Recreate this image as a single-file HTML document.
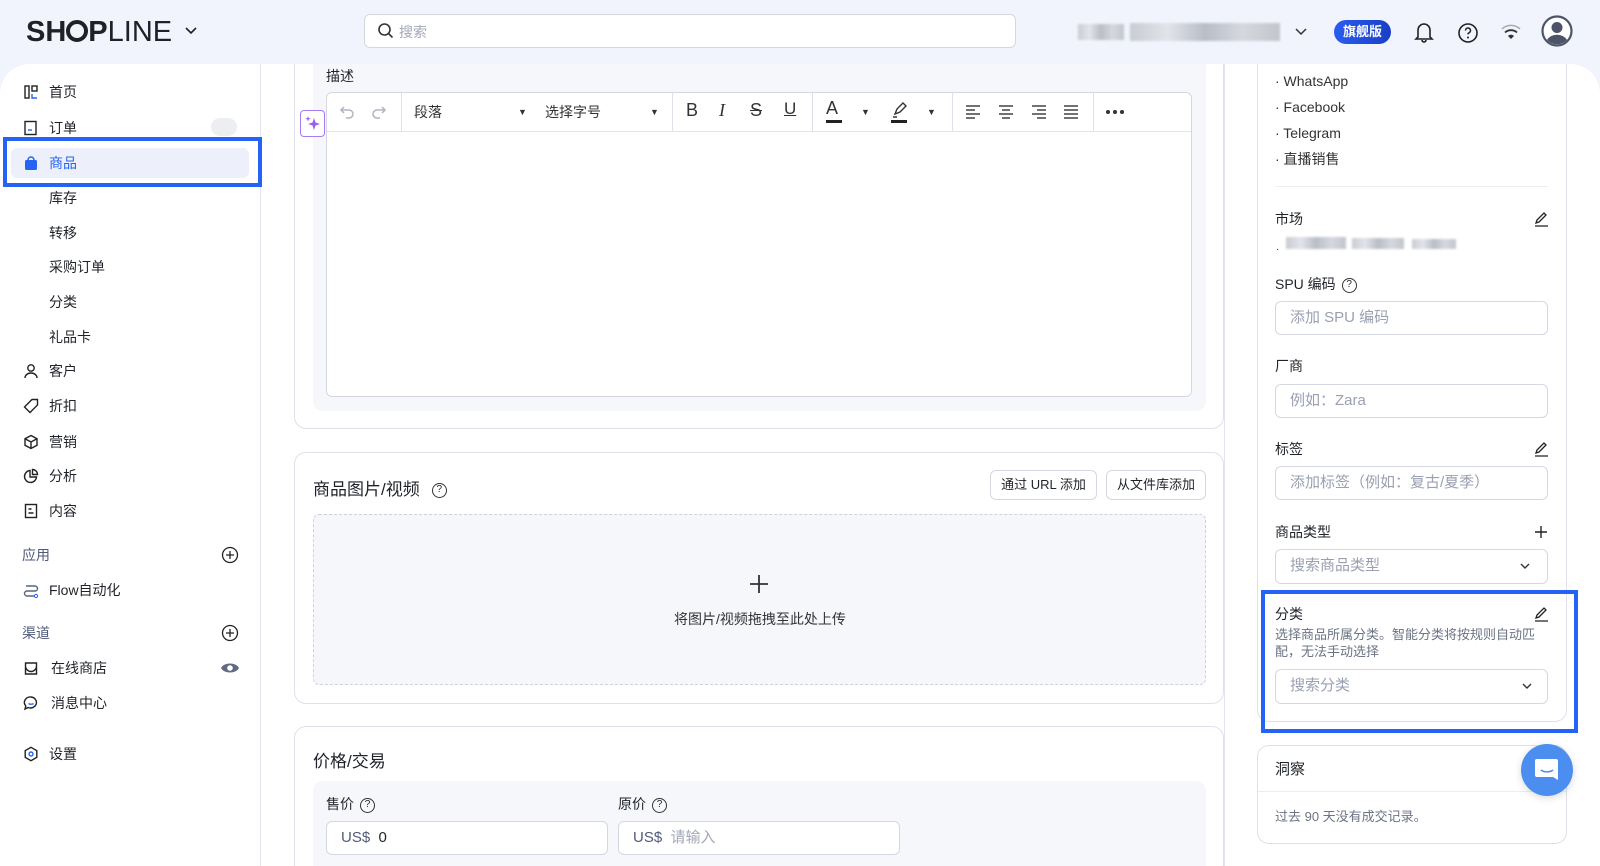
<!DOCTYPE html>
<html><head><meta charset="utf-8"><style>
*{box-sizing:border-box;margin:0;padding:0}
html,body{width:1600px;height:866px;overflow:hidden}
body{background:#f1f4fd;font-family:"Liberation Sans","Noto Sans CJK SC",sans-serif;font-size:14px;color:#1f2329;position:relative}
.a{position:absolute}
.panel{position:absolute;left:0;top:64px;width:1600px;height:900px;background:#fff;border-radius:30px 30px 0 0}
.vl{position:absolute;width:1px;background:#e3e5ee}
.nav{position:absolute;left:49px;font-size:14px;color:#1f2329;line-height:20px}
.ic{position:absolute;left:23px}
.card{position:absolute;border:1px solid #dfe1ea;border-radius:12px;background:#fff}
.inp{position:absolute;border:1px solid #d5d8e2;border-radius:6px;background:#fff;color:#9aa0b2;font-size:15px;padding-left:14px;line-height:32px}
.lbl{position:absolute;font-size:14px;color:#1f2329}
.tb{position:absolute;top:102px;font-size:15px;color:#333}
.sep{position:absolute;top:93px;width:1px;height:38px;background:#dfe1ea}
.q{display:inline-block;width:15px;height:15px;border:1.3px solid #333;border-radius:50%;font-size:10px;line-height:12px;text-align:center;vertical-align:middle;margin-left:6px}
.blur{position:absolute;background:linear-gradient(90deg,#c9ccd3,#e2e4ea,#b9bdc6,#d6d8df,#c2c5cd);filter:blur(1px)}
</style></head><body>
<!-- top bar -->
<div class="a" style="left:26px;top:16px;font-size:29px;font-weight:bold;letter-spacing:0px;color:#1e2128">SH<span style="display:inline-block;width:22px;height:22px;border:4px solid #1e2128;border-radius:50%;vertical-align:-1px"></span>P<span style="font-weight:normal">LINE</span></div>
<svg class="a" style="left:184px;top:25px" width="14" height="12"><path d="M2 3l5 5 5-5" stroke="#1e2128" stroke-width="1.6" fill="none"/></svg>
<div class="a" style="left:364px;top:14px;width:652px;height:34px;border:1px solid #d5d8e2;border-radius:6px;background:#fff"></div>
<svg class="a" style="left:377px;top:22px" width="18" height="18"><circle cx="7.5" cy="7.5" r="5.5" stroke="#333" stroke-width="1.6" fill="none"/><path d="M11.5 11.5l4 4" stroke="#333" stroke-width="1.6"/></svg>
<div class="a" style="left:399px;top:22px;color:#a3a8b6;font-size:14px">搜索</div>
<div class="blur" style="left:1078px;top:24px;width:46px;height:16px"></div>
<div class="blur" style="left:1130px;top:23px;width:150px;height:18px"></div>
<svg class="a" style="left:1294px;top:26px" width="14" height="12"><path d="M2 3l5 5 5-5" stroke="#333" stroke-width="1.5" fill="none"/></svg>
<div class="a" style="left:1334px;top:20px;width:57px;height:24px;border-radius:12px;background:linear-gradient(90deg,#2c5cf0,#1a3fc6);color:#fff;font-size:13px;font-weight:bold;text-align:center;line-height:24px">旗舰版</div>
<svg class="a" style="left:1413px;top:20px" width="22" height="24"><path d="M5 17V10a6 6 0 0 1 12 0v7l2 2H3z M9 20a2 2 0 0 0 4 0" stroke="#222" stroke-width="1.6" fill="none"/></svg>
<svg class="a" style="left:1456px;top:21px" width="24" height="24"><circle cx="12" cy="12" r="9" stroke="#222" stroke-width="1.6" fill="none"/><path d="M9.5 9.5a2.5 2.5 0 1 1 3.5 2.3c-.7.3-1 .8-1 1.6" stroke="#222" stroke-width="1.5" fill="none"/><circle cx="12" cy="16.5" r="1" fill="#222"/></svg>
<svg class="a" style="left:1499px;top:22px" width="24" height="20"><path d="M3 7a13 13 0 0 1 18 0" stroke="#aaa" stroke-width="1.5" fill="none"/><path d="M6 10.5a9 9 0 0 1 12 0" stroke="#333" stroke-width="1.8" fill="none"/><path d="M9 14l3 3 3-3a4 4 0 0 0-6 0z" fill="#333"/></svg>
<svg class="a" style="left:1541px;top:15px" width="32" height="32"><circle cx="16" cy="16" r="14.5" stroke="#4c5468" stroke-width="2.2" fill="#fff"/><circle cx="16" cy="12.5" r="5.5" fill="#4c5468"/><path d="M6 25a11 9 0 0 1 20 0a14 14 0 0 1-20 0z" fill="#4c5468"/></svg>

<div class="panel"></div>
<div class="vl" style="left:260px;top:64px;height:802px"></div>
<div class="vl" style="left:1224px;top:64px;height:802px"></div>

<!-- sidebar -->
<div class="a" style="left:3px;top:137px;width:259px;height:50px;border:4px solid #2563f5"></div>
<div class="a" style="left:11px;top:148px;width:238px;height:30px;background:#edf0fb;border-radius:6px"></div>
<svg class="ic" style="top:84px" width="16" height="16"><rect x="2" y="2" width="4" height="12" stroke="#222" stroke-width="1.4" fill="none"/><rect x="9" y="2" width="5" height="5" stroke="#222" stroke-width="1.4" fill="none"/><path d="M9 10v4h5" stroke="#2563f5" stroke-width="1.4" fill="none"/></svg>
<div class="nav" style="top:82px">首页</div>
<svg class="ic" style="top:120px" width="16" height="16"><rect x="2" y="1.5" width="11" height="13" stroke="#222" stroke-width="1.4" fill="none"/><path d="M5 10h4" stroke="#2563f5" stroke-width="1.4"/></svg>
<div class="nav" style="top:118px">订单</div>
<div class="a" style="left:211px;top:118px;width:26px;height:18px;border-radius:9px;background:#eceef2"></div>
<svg class="ic" style="top:155px" width="16" height="16"><path d="M5 5a3 3 0 0 1 6 0" stroke="#2563f5" stroke-width="1.5" fill="none"/><rect x="2" y="5" width="12" height="10" rx="1.5" fill="#2563f5"/></svg>
<div class="nav" style="top:153px;color:#2563f5">商品</div>
<div class="nav" style="top:188px">库存</div>
<div class="nav" style="top:223px">转移</div>
<div class="nav" style="top:257px">采购订单</div>
<div class="nav" style="top:292px">分类</div>
<div class="nav" style="top:327px">礼品卡</div>
<svg class="ic" style="top:363px" width="16" height="16"><circle cx="8" cy="5" r="3.2" stroke="#222" stroke-width="1.4" fill="none"/><path d="M2 15a6 5 0 0 1 12 0" stroke="#222" stroke-width="1.4" fill="none"/></svg>
<div class="nav" style="top:361px">客户</div>
<svg class="ic" style="top:398px" width="16" height="16"><path d="M9 1.5h5.5V7L7 14.5 1.5 9z" stroke="#222" stroke-width="1.4" fill="none"/></svg>
<div class="nav" style="top:396px">折扣</div>
<svg class="ic" style="top:434px" width="16" height="16"><path d="M8 1.5l6 3.2v6.6L8 14.5 2 11.3V4.7z M2 4.7l6 3.3 6-3.3 M8 8v6.5" stroke="#222" stroke-width="1.4" fill="none"/></svg>
<div class="nav" style="top:432px">营销</div>
<svg class="ic" style="top:468px" width="16" height="16"><path d="M7 2.5a6 6 0 1 0 6.5 6.5H7z" stroke="#222" stroke-width="1.4" fill="none"/><path d="M9.5 1.5a5 5 0 0 1 5 5h-5z" stroke="#222" stroke-width="1.4" fill="none"/></svg>
<div class="nav" style="top:466px">分析</div>
<svg class="ic" style="top:503px" width="16" height="16"><rect x="2.5" y="1.5" width="11" height="13" stroke="#222" stroke-width="1.4" fill="none"/><path d="M5.5 6h3M5.5 10h5" stroke="#222" stroke-width="1.4"/></svg>
<div class="nav" style="top:501px">内容</div>
<div class="nav" style="top:545px;left:22px;color:#4f5b7a">应用</div>
<svg class="a" style="left:221px;top:546px" width="18" height="18"><circle cx="9" cy="9" r="7.5" stroke="#222" stroke-width="1.3" fill="none"/><path d="M9 5v8M5 9h8" stroke="#222" stroke-width="1.3"/></svg>
<svg class="ic" style="top:582px" width="16" height="16"><path d="M3 4h9a2.5 2.5 0 0 1 0 5H4a2.5 2.5 0 0 0 0 5h8" stroke="#5a6480" stroke-width="1.4" fill="none"/><circle cx="13" cy="14" r="1.6" stroke="#2563f5" fill="none"/></svg>
<div class="nav" style="top:580px">Flow自动化</div>
<div class="nav" style="top:623px;left:22px;color:#4f5b7a">渠道</div>
<svg class="a" style="left:221px;top:624px" width="18" height="18"><circle cx="9" cy="9" r="7.5" stroke="#222" stroke-width="1.3" fill="none"/><path d="M9 5v8M5 9h8" stroke="#222" stroke-width="1.3"/></svg>
<svg class="ic" style="top:660px" width="16" height="16"><path d="M2.5 6V3h11v3a2 2 0 0 1-11 0z M2.5 7v7h11V7" stroke="#222" stroke-width="1.4" fill="none"/></svg>
<div class="nav" style="top:658px;left:51px">在线商店</div>
<svg class="a" style="left:220px;top:661px" width="20" height="14"><path d="M1 7c3-6 15-6 18 0c-3 6-15 6-18 0z" fill="#5f6a85"/><circle cx="10" cy="7" r="2.8" fill="#fff"/></svg>
<svg class="ic" style="top:695px" width="16" height="16"><path d="M8 2a6 5.5 0 1 1-3 10.5L2 14l.8-3A6 5.5 0 0 1 8 2z" stroke="#222" stroke-width="1.4" fill="none"/><path d="M5.5 8.5c1 1 4 1 5 0" stroke="#2563f5" stroke-width="1.3" fill="none"/></svg>
<div class="nav" style="top:693px;left:51px">消息中心</div>
<svg class="ic" style="top:746px" width="16" height="16"><path d="M8 1.3l5.8 3.3v6.8L8 14.7 2.2 11.4V4.6z" stroke="#222" stroke-width="1.4" fill="none"/><circle cx="8" cy="8" r="2" stroke="#2563f5" stroke-width="1.4" fill="none"/></svg>
<div class="nav" style="top:744px">设置</div>

<!-- card 1 description -->
<div class="card" style="left:294px;top:64px;width:930px;height:365px;border-top:none;border-radius:0 0 12px 12px"></div>
<div class="a" style="left:313px;top:64px;width:893px;height:347px;background:#f6f7fb;border-radius:0 0 10px 10px"></div>
<div class="lbl" style="left:326px;top:66px">描述</div>
<div class="a" style="left:326px;top:92px;width:866px;height:305px;background:#fff;border:1px solid #d5d8e2;border-radius:6px"></div>
<div class="a" style="left:327px;top:131px;width:864px;height:1px;background:#e3e5ee"></div>
<div class="a" style="left:300px;top:110px;width:25px;height:27px;border:1.5px solid #a77cf2;border-radius:4px;background:#fff"></div>
<svg class="a" style="left:303px;top:114px" width="20" height="20"><path d="M11 4l1.5 4.5L17 10l-4.5 1.5L11 16l-1.5-4.5L5 10l4.5-1.5z" fill="#9b5cf0"/><path d="M5 2l.7 2 2 .7-2 .7L5 7.5l-.7-2-2-.7 2-.7z" fill="#9b5cf0"/></svg>
<svg class="a" style="left:338px;top:103px" width="18" height="18"><path d="M6 4L3 7l3 3M3 7h8a4 4 0 0 1 0 8H8" stroke="#b0b4c0" stroke-width="1.5" fill="none"/></svg>
<svg class="a" style="left:370px;top:103px" width="18" height="18"><path d="M12 4l3 3-3 3M15 7H7a4 4 0 0 0 0 8h3" stroke="#b0b4c0" stroke-width="1.5" fill="none"/></svg>
<div class="sep" style="left:401px"></div>
<div class="tb" style="left:414px;font-size:14px">段落</div>
<div class="tb" style="left:518px;font-size:9px;top:107px">▼</div>
<div class="tb" style="left:545px;font-size:14px">选择字号</div>
<div class="tb" style="left:650px;font-size:9px;top:107px">▼</div>
<div class="sep" style="left:672px"></div>
<div class="tb" style="left:686px;font-size:18px;top:100px">B</div>
<div class="tb" style="left:719px;font-size:18px;top:100px;font-family:'Liberation Serif';font-style:italic">I</div>
<div class="tb" style="left:750px;font-size:18px;top:100px;text-decoration:line-through">S</div>
<div class="tb" style="left:784px;font-size:17px;top:99px;text-decoration:underline">U</div>
<div class="sep" style="left:812px"></div>
<div class="tb" style="left:826px;font-size:18px;top:98px">A</div>
<div class="a" style="left:826px;top:120px;width:16px;height:3px;background:#222"></div>
<div class="tb" style="left:861px;font-size:9px;top:107px">▼</div>
<svg class="a" style="left:890px;top:100px" width="18" height="24"><path d="M5 14l2-5 6-6 3 3-6 6z M3 17h4" stroke="#333" stroke-width="1.4" fill="none"/><rect x="1" y="20" width="16" height="3" fill="#222"/></svg>
<div class="tb" style="left:927px;font-size:9px;top:107px">▼</div>
<div class="sep" style="left:952px"></div>
<svg class="a" style="left:964px;top:104px" width="120" height="16"><g stroke="#444" stroke-width="1.4"><path d="M2 2h14M2 6h9M2 10h14M2 14h9"/><path d="M35 2h14M38 6h8M35 10h14M38 14h8"/><path d="M68 2h14M73 6h9M68 10h14M73 14h9"/><path d="M100 2h14M100 6h14M100 10h14M100 14h14"/></g></svg>
<div class="sep" style="left:1093px"></div>
<svg class="a" style="left:1105px;top:109px" width="20" height="6"><circle cx="3" cy="3" r="2" fill="#333"/><circle cx="10" cy="3" r="2" fill="#333"/><circle cx="17" cy="3" r="2" fill="#333"/></svg>

<!-- card 2 media -->
<div class="card" style="left:294px;top:452px;width:930px;height:252px"></div>
<div class="a" style="left:313px;top:475px;font-size:17px">商品图片/视频<span class="q" style="margin-left:12px">?</span></div>
<div class="a" style="left:990px;top:470px;width:107px;height:30px;border:1px solid #d5d8e2;border-radius:6px;font-size:13px;text-align:center;line-height:28px">通过 URL 添加</div>
<div class="a" style="left:1106px;top:470px;width:100px;height:30px;border:1px solid #d5d8e2;border-radius:6px;font-size:13px;text-align:center;line-height:28px">从文件库添加</div>
<div class="a" style="left:313px;top:514px;width:893px;height:171px;border:1.5px dashed #cfd2dc;border-radius:6px;background:#f6f7fb"></div>
<svg class="a" style="left:749px;top:574px" width="20" height="20"><path d="M10 1v18M1 10h18" stroke="#333" stroke-width="1.8"/></svg>
<div class="a" style="left:560px;top:609px;width:400px;text-align:center;font-size:14px;color:#333">将图片/视频拖拽至此处上传</div>

<!-- card 3 price -->
<div class="card" style="left:294px;top:726px;width:930px;height:180px"></div>
<div class="a" style="left:313px;top:747px;font-size:17px">价格/交易</div>
<div class="a" style="left:313px;top:781px;width:893px;height:120px;background:#f6f7fb;border-radius:10px"></div>
<div class="lbl" style="left:326px;top:794px">售价<span class="q">?</span></div>
<div class="lbl" style="left:618px;top:794px">原价<span class="q">?</span></div>
<div class="inp" style="left:326px;top:821px;width:282px;height:34px;color:#4f5b7a">US$&nbsp; <span style="color:#1f2329">0</span></div>
<div class="inp" style="left:618px;top:821px;width:282px;height:34px;color:#4f5b7a">US$&nbsp; <span style="color:#a3a8b6">请输入</span></div>

<!-- right card -->
<div class="card" style="left:1257px;top:64px;width:310px;height:658px;border-top:none;border-radius:0 0 12px 12px"></div>
<div class="a" style="left:1275px;top:68px;font-size:14px;line-height:26px;color:#333">· WhatsApp<br>· Facebook<br>· Telegram<br>· 直播销售</div>
<div class="a" style="left:1275px;top:186px;width:273px;height:1px;background:#eceef2"></div>
<div class="lbl" style="left:1275px;top:209px">市场</div>
<svg class="a" style="left:1533px;top:211px" width="16" height="16"><path d="M3 12l1-3 7-7 2 2-7 7z M2 15h13" stroke="#222" stroke-width="1.3" fill="none"/></svg>
<div class="a" style="left:1276px;top:244px;font-size:10px">·</div>
<div class="blur" style="left:1286px;top:237px;width:60px;height:12px"></div>
<div class="blur" style="left:1352px;top:238px;width:52px;height:11px"></div>
<div class="blur" style="left:1412px;top:239px;width:44px;height:10px"></div>
<div class="lbl" style="left:1275px;top:274px">SPU 编码<span class="q">?</span></div>
<div class="inp" style="left:1275px;top:301px;width:273px;height:34px">添加 SPU 编码</div>
<div class="lbl" style="left:1275px;top:356px">厂商</div>
<div class="inp" style="left:1275px;top:384px;width:273px;height:34px">例如：Zara</div>
<div class="lbl" style="left:1275px;top:439px">标签</div>
<svg class="a" style="left:1533px;top:441px" width="16" height="16"><path d="M3 12l1-3 7-7 2 2-7 7z M2 15h13" stroke="#222" stroke-width="1.3" fill="none"/></svg>
<div class="inp" style="left:1275px;top:466px;width:273px;height:34px">添加标签（例如：复古/夏季）</div>
<div class="lbl" style="left:1275px;top:522px">商品类型</div>
<svg class="a" style="left:1533px;top:524px" width="16" height="16"><path d="M8 2v12M2 8h12" stroke="#222" stroke-width="1.4"/></svg>
<div class="inp" style="left:1275px;top:549px;width:273px;height:35px">搜索商品类型</div>
<svg class="a" style="left:1519px;top:561px" width="12" height="10"><path d="M2 3l4 4 4-4" stroke="#333" stroke-width="1.4" fill="none"/></svg>
<div class="a" style="left:1261px;top:590px;width:317px;height:143px;border:4px solid #2563f5"></div>
<div class="lbl" style="left:1275px;top:604px">分类</div>
<svg class="a" style="left:1533px;top:606px" width="16" height="16"><path d="M3 12l1-3 7-7 2 2-7 7z M2 15h13" stroke="#222" stroke-width="1.3" fill="none"/></svg>
<div class="a" style="left:1275px;top:626px;width:270px;font-size:13px;line-height:17px;color:#6b7385">选择商品所属分类。智能分类将按规则自动匹配，无法手动选择</div>
<div class="inp" style="left:1275px;top:669px;width:273px;height:35px">搜索分类</div>
<svg class="a" style="left:1521px;top:681px" width="12" height="10"><path d="M2 3l4 4 4-4" stroke="#333" stroke-width="1.4" fill="none"/></svg>

<div class="card" style="left:1257px;top:745px;width:310px;height:99px"></div>
<div class="a" style="left:1275px;top:758px;font-size:15px">洞察</div>
<div class="a" style="left:1258px;top:791px;width:308px;height:1px;background:#eceef2"></div>
<div class="a" style="left:1275px;top:806px;font-size:13px;color:#6b7385">过去 90 天没有成交记录。</div>
<div class="a" style="left:1521px;top:744px;width:52px;height:52px;border-radius:50%;background:#4b8ef0;box-shadow:0 2px 8px rgba(0,0,0,.15)"></div>
<svg class="a" style="left:1533px;top:756px" width="28" height="28"><path d="M4 3h19a2 2 0 0 1 2 2v19l-5-3H4a2 2 0 0 1-2-2V5a2 2 0 0 1 2-2z" fill="#fff"/><path d="M8 14c3 2.5 9 2.5 12 0" stroke="#4b8ef0" stroke-width="1.6" fill="none"/></svg>
</body></html>
